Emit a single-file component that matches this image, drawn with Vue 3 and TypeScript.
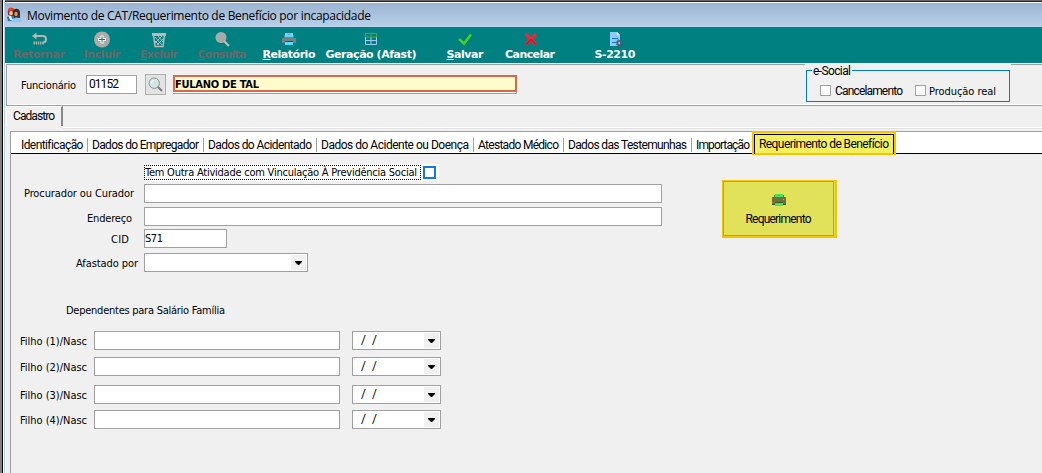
<script setup lang="ts">
import { ref } from 'vue'

interface Tool { id: string; label: string; width: number; hot: boolean; off: boolean }
interface Tab { label: string; width: number }
interface Field { id: string; label: string; width: number; value: string }

// Spreads a label's letters so that it takes the given width.
const vFit = {
  mounted(el: HTMLElement, binding: { value: number }) {
    const count = (el.textContent ?? '').trim().length
    const natural = el.getBoundingClientRect().width
    const step = (binding.value - natural) / Math.max(count - 1, 1)
    el.style.letterSpacing = `${step}px`
    el.style.marginRight = `${-step}px`
  },
}

const tools: Tool[] = [
  { id: 'back', label: 'Retornar', width: 52, hot: false, off: true },
  { id: 'add', label: 'Incluir', width: 37, hot: true, off: true },
  { id: 'trash', label: 'Excluir', width: 38, hot: true, off: true },
  { id: 'find', label: 'Consulta', width: 49, hot: true, off: true },
  { id: 'print', label: 'Relatório', width: 53, hot: true, off: false },
  { id: 'grid', label: 'Geração (Afast)', width: 91, hot: false, off: false },
  { id: 'save', label: 'Salvar', width: 37, hot: true, off: false },
  { id: 'cancel', label: 'Cancelar', width: 50, hot: false, off: false },
  { id: 'doc', label: 'S-2210', width: 41, hot: false, off: false },
]

const tabs: Tab[] = [
  { label: 'Identificação', width: 62 },
  { label: 'Dados do Empregador', width: 107 },
  { label: 'Dados do Acidentado', width: 104 },
  { label: 'Dados do Acidente ou Doença', width: 148 },
  { label: 'Atestado Médico', width: 81 },
  { label: 'Dados das Testemunhas', width: 119 },
  { label: 'Importação', width: 54 },
]

const fields: Field[] = [
  { id: 'proc', label: 'Procurador ou Curador', width: 110, value: '' },
  { id: 'end', label: 'Endereço', width: 45, value: '' },
  { id: 'cid', label: 'CID', width: 18, value: 'S71' },
]

const children = [1, 2, 3, 4]
const otherActivity = ref(false)
</script>

<template>
  <div class="window">
    <header class="title">
      <svg class="app-icon" width="16" height="16" viewBox="0 0 16 16">
        <path d="M2 7Q1 1 5 1Q9 1 9 5L8 9H2Z" fill="#7a3423" />
        <path d="M7 8Q6 3 9 2Q13 1 14 5L14 12H8Z" fill="#3c2a26" />
        <ellipse cx="5" cy="6" rx="1.8" ry="2.2" fill="#e9c3a8" />
        <ellipse cx="10" cy="7" rx="1.7" ry="2.2" fill="#d99a78" />
        <path d="M2 2Q5 -1 8 2L6 4H2Z" fill="#ef3b21" />
        <path d="M1 10Q4 7 8 10V14H2Z" fill="#2d6fb0" />
        <path d="M5 14Q8 9 14 11L16 15H7Z" fill="#8fc4ee" />
        <path d="M2 8L5 9L7 13H4Z" fill="#e8eef4" />
      </svg>
      <span v-fit="344" class="title-text">Movimento de CAT/Requerimento de Benefício por incapacidade</span>
    </header>

    <nav class="toolbar">
      <div v-for="t in tools" :key="t.id" class="tool" :class="{ off: t.off }">
        <svg width="18" height="18" viewBox="0 0 18 18">
          <g v-if="t.id === 'back'" fill="none" stroke="#b5b5b5">
            <path d="M5 5H13Q16 5 16 8Q16 11.5 13 11.5" stroke-width="2" />
            <path d="M2 5L6.5 1.5V8.5Z" fill="#b5b5b5" stroke="none" />
            <path d="M3.5 12H14" stroke-width="3" stroke-dasharray="1.4 .8" />
          </g>
          <g v-else-if="t.id === 'add'">
            <circle cx="9" cy="8.5" r="8" fill="#ababab" />
            <path d="M9 4.5V12.5M5 8.5H13" stroke="#fff" stroke-width="3" />
            <path d="M9 5.5V11.5M6 8.5H12" stroke="#087f7d" />
          </g>
          <g v-else-if="t.id === 'trash'" fill="none" stroke="#b9b9b9">
            <path d="M2 3.5H16" stroke-width="3" />
            <path d="M3.5 4L5 15.5H13L14.5 4" stroke-width="1.5" />
            <path d="M5 6L12 14M8 5L13 11M12 5L5 12M14 7L7 14M4 9L9 14" stroke-width="1" />
          </g>
          <g v-else-if="t.id === 'find'">
            <circle cx="8" cy="6.5" r="5.5" fill="#a9a9a9" />
            <path d="M11 10L16 15" stroke="#bcbcbc" stroke-width="2.2" />
          </g>
          <g v-else-if="t.id === 'print'">
            <path d="M5 2H13V7H5ZM5 10H13V14H5Z" fill="#4de1f8" />
            <path d="M4 4H5V6H13V4H14V7H16V12H13V10H5V12H2V7H4Z" fill="#74808a" />
            <path d="M8 3H10V4H8Z" fill="#d86bdc" />
            <path d="M5 10H13V11H5Z" fill="#344956" />
          </g>
          <g v-else-if="t.id === 'grid'" fill="none">
            <path d="M3.5 6V13.5H14.5V6M3 9.5H15M9 6V14" stroke="#9bcdf2" />
            <path d="M3.5 6V2.5H14.5V6H3.5M9 2V6" stroke="#52a447" />
          </g>
          <path v-else-if="t.id === 'save'" d="M3 8L8 12.5L15 3.5" fill="none" stroke="#43d31c" stroke-width="2.6" />
          <g v-else-if="t.id === 'cancel'">
            <path d="M4.5 3L15 13.5M15 3L4.5 13.5" stroke="#ef2637" stroke-width="3.4" />
            <path d="M10 8.5L15 13.5M10 8.5L5 13.5" stroke="#cf1529" stroke-width="1.4" />
          </g>
          <g v-else>
            <path d="M4 1H11L14 4V15H4Z" fill="#90caf9" />
            <path d="M11 1V4H14Z" fill="#e3f3ff" />
            <path d="M6 7.5H12M6 11.5H10" stroke="#1976d2" />
            <circle cx="13.5" cy="12" r="2.2" fill="none" stroke="#456270" stroke-width="1.8" />
            <circle cx="13.5" cy="12" r="3.5" fill="none" stroke="#456270" stroke-dasharray="1.4 1.35" />
          </g>
        </svg>
        <span v-fit="t.width" class="tool-label"><u v-if="t.hot">{{ t.label[0] }}</u><template v-else>{{ t.label[0] }}</template>{{ t.label.slice(1) }}</span>
      </div>
    </nav>

    <section class="employee">
      <span v-fit="55" class="tahoma employee-label">Funcionário</span>
      <div class="box code"><span v-fit="30">01152</span></div>
      <button class="search" type="button">
        <svg width="15" height="15" viewBox="0 0 15 15">
          <path d="M9.5 9.5L14 14" stroke="#777" stroke-width="1.8" />
          <circle cx="6.2" cy="6.2" r="5.2" fill="#d5e5e7" stroke="#879193" />
          <path d="M3.4 6Q3.5 3.5 6 3.4" fill="none" stroke="#fff" />
        </svg>
      </button>
      <div class="name-wrap"><div class="name"><span v-fit="84">FULANO DE TAL</span></div></div>
      <div class="esocial">
        <div class="esocial-frame">
          <div class="legend"><span v-fit="38">e-Social</span></div>
          <label class="option"><i class="check" /><span v-fit="68">Cancelamento</span></label>
          <label class="option real"><i class="check" /><span v-fit="67" class="tahoma">Produção real</span></label>
        </div>
      </div>
    </section>

    <div class="main-tabs"><div class="main-tab"><span v-fit="42">Cadastro</span></div></div>

    <main class="page">
      <div class="tabs">
        <div v-for="t in tabs" :key="t.label" class="tab"><span v-fit="t.width">{{ t.label }}</span></div>
        <div class="active"><div class="active-in"><span v-fit="130">Requerimento de Benefício</span></div></div>
      </div>

      <div class="content">
        <form class="form" @submit.prevent>
          <div class="activity" @click="otherActivity = !otherActivity">
            <div class="focus"><span v-fit="272" class="tahoma">Tem Outra Atividade com Vinculação À Previdência Social</span></div>
            <div class="blue-check" :class="{ on: otherActivity }" />
          </div>
          <div v-for="f in fields" :key="f.id" class="row" :class="f.id">
            <label class="label tahoma"><span v-fit="f.width">{{ f.label }}</span></label>
            <div class="box field"><span v-if="f.value" v-fit="18" class="tahoma">{{ f.value }}</span></div>
          </div>
          <div class="row reason">
            <label class="label tahoma"><span v-fit="62">Afastado por</span></label>
            <div class="box combo"><i class="drop"><svg width="7" height="4" viewBox="0 0 7 4"><path d="M0 0H7V1L4 4H3L0 1Z" /></svg></i></div>
          </div>
          <div class="dependents tahoma"><span v-fit="159">Dependentes para Salário Família</span></div>
          <div v-for="n in children" :key="n" class="child" :class="'c' + n">
            <label class="child-label tahoma"><span v-fit="67">Filho ({{ n }})/Nasc</span></label>
            <div class="box child-name" />
            <div class="box date"><span class="slashes">/&nbsp; /</span><i class="drop"><svg width="7" height="4" viewBox="0 0 7 4"><path d="M0 0H7V1L4 4H3L0 1Z" /></svg></i></div>
          </div>
        </form>
        <button type="button" class="request">
          <span class="request-in">
            <svg width="14" height="12" viewBox="0 0 14 12">
              <path d="M3 0H11V4H3ZM3 8H11V12H3Z" fill="#45e45e" />
              <path d="M0 3H2V1H3V3H11V1H12V3H14V10H11V9H3V10H0Z" fill="#6f7137" />
              <path d="M3 8H11V9H3ZM0 10H3V11H0ZM11 10H14V11H11Z" fill="#34561f" />
              <path d="M6 1H8V2H6Z" fill="#c58a48" /><path d="M11 5H12V6H11Z" fill="#39e65b" />
            </svg>
            <span v-fit="66" class="request-text">Requerimento</span>
          </span>
        </button>
      </div>
    </main>
  </div>
</template>

<style>
html, body { margin: 0; overflow: hidden; background: #f0f0f0; }
</style>

<style scoped>
* { box-sizing: border-box; }
.window {
  width: 1042px; height: 473px; overflow: hidden; color: #000; background: #f0f0f0;
  border-left: 5px solid; border-image: linear-gradient(to right, #808080 0 2px, #000 2px 3px, #fff 3px 4px, #b9d1ea 4px 5px) 0 0 0 5;
  font: 12px/14px Roboto, "Liberation Sans", Arial, sans-serif; white-space: nowrap;
}
.tahoma { font-family: "DejaVu Sans Condensed", "DejaVu Sans", sans-serif; font-size: 11px; }
span { flex: none; }
.title {
  height: 27px; padding: 3px 0 0 1px; display: flex; align-items: center; gap: 5px;
  background: linear-gradient(#666 0 1px, #222 1px 2px, #fff 2px 3px, #99b4d1 3px, #b9d1ea 27px);
}
.app-icon { flex: none; margin-top: -1px; }
.title-text { font: 12px/16px "Open Sans", "Noto Sans", sans-serif; margin-top: 2px; }
.toolbar {
  height: 36px; display: grid; background: #008080;
  grid-template-columns: 68px 58px 56px 70px 64px 100px 88px 42px 128px;
}
.tool { display: flex; flex-direction: column; align-items: center; padding-top: 4px; }
.tool svg { flex: none; }
.tool-label { color: #fff; font: bold 11px/13px "DejaVu Sans", sans-serif; margin-top: -1px; }
.off .tool-label { color: #696969; }
.employee {
  height: 43px; display: flex; align-items: flex-start; margin-left: 1px;
  border-top: 1px solid #fff; border-bottom: 1px solid #a0a0a0;
  box-shadow: inset 0 1px #a0a0a0, inset 1px 0 #a0a0a0, inset 0 -1px #fff;
}
.employee-label { margin: 15px 0 0 15px; }
.box { border: 1px solid #a0a0a0; background: #fff; height: 19px; display: flex; align-items: center; }
.code { margin: 11px 0 0 10px; width: 51px; padding: 0 0 2px 2px; }
.search {
  margin: 10px 0 0 8px; width: 21px; height: 21px; padding: 0; background: #e3e3e3; border: 1px solid #adadad;
  display: flex; align-items: center; justify-content: center;
}
.name-wrap { margin: 11px 0 0 7px; width: 344px; height: 19px; border-right: 1px solid #a0a0a0; border-bottom: 1px solid #a0a0a0; background: #fff; }
.name {
  width: 344px; height: 17px; background: #fffbcd; border: 2px solid #d9694a; display: flex; align-items: center; padding-top: 1px;
  font: bold 11px/13px "DejaVu Sans Condensed", "DejaVu Sans", sans-serif;
}
.esocial { margin-left: 288px; width: 206px; height: 40px; padding: 6px 1px 0; background: #f0f0f0; }
.esocial-frame { height: 32px; border: 1px solid #0078d7; display: flex; align-items: flex-start; padding-top: 14px; }
.legend { width: 40px; height: 14px; margin: -21px -32px 0 5px; padding-left: 1px; background: #f0f0f0; flex: none; }
.option { display: flex; width: 95px; flex: none; gap: 4px; line-height: 13px; }
.real { gap: 3px; }
.check { width: 11px; height: 11px; flex: none; border: 1px solid #a0a0a0; background: #fff; }
.main-tabs { height: 21px; display: flex; margin-left: 1px; }
.main-tab { height: 20px; width: 57px; border-right: 2px solid #888; border-top: 1px solid #fff; border-left: 1px solid #fff; padding: 2px 0 0 6px; }
.main-tabs::after { content: ""; flex: 1; height: 21px; border-bottom: 1px solid #fff; box-shadow: 0 1px #e2e2e2; }
.page { margin: 4px 0 0 5px; height: 342px; border-left: 1px solid #a0a0a0; border-top: 1px solid #a0a0a0; }
.tabs { height: 22px; display: flex; background: #fff; border-bottom: 1px solid #000; }
.tab { height: 14px; margin-top: 6px; border-right: 1px solid #a0a0a0; padding-left: 4px; }
.active { margin: -1px 0 0; width: 144px; height: 24px; border: 2px solid #f6c400; background: #f3f060; flex: none; }
.active-in { height: 20px; margin: 1px 0 0; border: 1px solid #000; border-bottom: 0; padding: 2px 0 0 4px; }
.tab:nth-child(1) { width: 77px; padding-left: 10px; }
.tab:nth-child(2) { width: 116px; }
.tab:nth-child(3) { width: 113px; }
.tab:nth-child(4) { width: 157px; }
.tab:nth-child(5) { width: 90px; }
.tab:nth-child(6) { width: 128px; }
.tab:nth-child(7) { width: 60px; border: 0; }
.content { display: flex; align-items: flex-start; }
.form { width: 651px; flex: none; }
.activity { display: flex; margin: 10px 0 3px 133px; width: 295px; height: 17px; background: #fff; }
.focus { width: 277px; height: 15px; margin-top: 1px; padding-top: 1px; border: 1px dotted #000; display: flex; align-items: center; }
.blue-check { width: 13px; height: 13px; margin: 2px 0 0 2px; border: 2px solid #1377ee; }
.blue-check.on { background: #1377ee; }
.row { display: flex; height: 19px; }
.label { width: 133px; height: 19px; display: flex; align-items: center; justify-content: flex-end; padding-right: 10px; }
.field { width: 518px; }
.end { margin-top: 4px; }
.end .label { padding: 5px 12px 0 0; }
.cid { margin-top: 3px; }
.cid .label { padding: 2px 15px 0 0; }
.cid .field { width: 83px; }
.reason { margin-top: 5px; }
.reason .label { padding: 2px 6px 0 0; }
.combo { width: 164px; justify-content: flex-end; }
.drop { width: 15px; height: 15px; margin: 0 1px 0 auto; background: #f0f0f0; display: flex; align-items: center; justify-content: center; }
.dependents { height: 59px; padding: 32px 0 0 55px; }
.child { display: flex; height: 19px; }
.child-label { width: 83px; padding: 4px 0 0 9px; }
.child-name { width: 246px; margin-right: 12px; }
.date { width: 89px; }
.slashes { padding: 0 0 2px 8px; }
.c2 { margin-top: 7px; }
.c3 { margin-top: 9px; }
.c4 { margin-top: 6px; }
.request { margin: 26px 0 0 60px; width: 115px; height: 58px; padding: 0; border: 1px solid #f6c400; border-right-width: 2px; border-bottom-width: 2px; background: #e1e15a; font: 12px/14px Roboto, "Liberation Sans", Arial, sans-serif; color: #000; }
.request-in { display: flex; flex-direction: column; align-items: center; width: 111px; height: 55px; padding-top: 12px; border: 1px solid #aaa832; }
.request-text { margin-top: 6px; }
</style>
